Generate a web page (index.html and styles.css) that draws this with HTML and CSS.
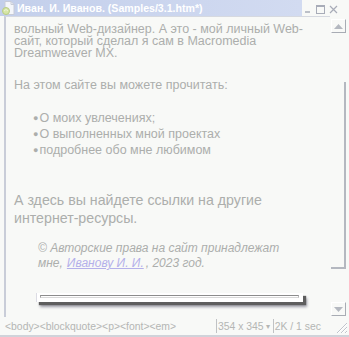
FILE: index.html
```html
<!DOCTYPE html>
<html>
<head>
<meta charset="utf-8">
<link rel="stylesheet" href="styles.css">
</head>
<body>
<div class="window">
  <div class="titlebar">
    <div class="title">
      <svg class="ticon" width="13" height="14" viewBox="0 0 13 14">
        <path d="M3 0.5 H9 L12 3.5 V13.5 H3 Z" fill="#f4f6fa" stroke="#c8ccd8"/>
        <path d="M9 0.5 V3.5 H12" fill="none" stroke="#c8ccd8"/>
        <circle cx="4" cy="10" r="3.5" fill="#d6e6a6" stroke="#b8cc84"/>
        <path d="M2 10 Q4 7 6 10" fill="none" stroke="#eef4d8"/>
      </svg>
      <span>Иван. И. Иванов. (Samples/3.1.htm*)</span>
    </div>
    <div class="controls">
      <span class="cbtn"><svg width="8" height="8" viewBox="0 0 8 8"><path d="M1 7 H6" stroke="#a8acb8" stroke-width="1.5"/></svg></span>
      <span class="cbtn"><svg width="9" height="9" viewBox="0 0 9 9"><rect x="0.5" y="0.5" width="8" height="8" fill="none" stroke="#a8acb8"/><path d="M0.5 1.5 H8.5" stroke="#a8acb8"/></svg></span>
      <span class="cbtn"><svg width="9" height="9" viewBox="0 0 9 9"><path d="M1 1 L8 8 M8 1 L1 8" stroke="#a8acb8" stroke-width="1.2"/></svg></span>
    </div>
  </div>
  <div class="main">
    <div class="doc">
      <p class="intro">вольный Web-дизайнер. А это - мой личный Web-сайт, который сделал я сам в Macromedia Dreamweaver MX.</p>
      <p class="lead">На этом сайте вы можете прочитать:</p>
      <ul class="list">
        <li>О моих увлечениях;</li>
        <li>О выполненных мной проектах</li>
        <li>подробнее обо мне любимом</li>
      </ul>
      <p class="big">А здесь вы найдете ссылки на другие интернет-ресурсы.</p>
      <div class="copy">
        <div class="cline">© Авторские права на сайт принадлежат</div>
        <div class="cline row"><span>мне,</span><span class="link">Иванову И. И.</span><span>, 2023 год.</span></div>
      </div>
      <div class="hrbox"><div class="hrline"></div></div>
    </div>
    <div class="scrollbar">
      <div class="sbtn up"><svg width="9" height="5" viewBox="0 0 9 5"><path d="M0 5 L4.5 0 L9 5 Z" fill="#b4b8c0"/></svg></div>
      <div class="track short"></div>
      <div class="thumb"></div>
      <div class="track"></div>
      <div class="sbtn down"><svg width="9" height="5" viewBox="0 0 9 5"><path d="M0 0 L4.5 5 L9 0 Z" fill="#b4b8c0"/></svg></div>
    </div>
  </div>
  <div class="status">
    <span class="tags">&lt;body&gt;&lt;blockquote&gt;&lt;p&gt;&lt;font&gt;&lt;em&gt;</span>
    <span class="info"><span class="sep"></span>354 x 345 <span class="arr">▾</span><span class="sep"></span>2K / 1 sec</span>
    <svg class="grip" width="13" height="13" viewBox="0 0 13 13">
      <path d="M12 2 L2 12 M12 6 L6 12 M12 10 L10 12" stroke="#c0c4cc" stroke-width="1"/>
      <path d="M12 3 L3 12 M12 7 L7 12 M12 11 L11 12" stroke="#ffffff" stroke-width="1"/>
    </svg>
  </div>
</div>
</body>
</html>
```
FILE: styles.css
```css
* { box-sizing: border-box; }
html, body { margin: 0; padding: 0; }
body {
  width: 349px;
  height: 337px;
  overflow: hidden;
  background: #f8f9f7;
  font-family: "Liberation Sans", Arial, sans-serif;
  color: #acaeac;
}
.window {
  width: 349px;
  height: 337px;
  display: flex;
  flex-direction: column;
}
.titlebar {
  height: 16px;
  display: flex;
  flex: none;
}
.title {
  width: 303px;
  background: linear-gradient(to right, #c3cfeb, #d2dbf1);
  color: #ffffff;
  font-weight: bold;
  font-size: 10.6px;
  display: flex;
  align-items: center;
  gap: 2px;
  padding-left: 2px;
  white-space: nowrap;
}
.ticon { flex: none; }
.controls {
  flex: 1;
  display: flex;
  align-items: center;
  justify-content: flex-end;
  gap: 2px;
  padding-right: 10px;
  padding-top: 2px;
}
.cbtn {
  width: 11px;
  height: 11px;
  display: flex;
  align-items: center;
  justify-content: center;
}
.main {
  height: 301px;
  display: flex;
  padding-left: 4px;
  flex: none;
}
.doc {
  flex: 1;
  border-left: 2px solid #c9cdd8;
  border-top: 1px solid #d6d9e0;
  padding: 6px 0 0 8px;
  overflow: hidden;
}
.doc p, .doc ul { margin: 0; }
.intro {
  font-size: 12.5px;
  line-height: 12px;
  width: 302px;
}
.lead {
  font-size: 12.5px;
  line-height: 12px;
  margin-top: 20px !important;
}
.list {
  list-style: none;
  padding: 0 0 0 19px;
  margin-top: 19px !important;
  font-size: 12.5px;
  line-height: 16px;
}
.list li::before {
  content: "●";
  font-size: 9px;
  margin-right: 1px;
  vertical-align: 1px;
}
.big {
  font-size: 14.2px;
  line-height: 18px;
  margin-top: 33px !important;
  width: 290px;
}
.copy {
  font-size: 12px;
  font-style: italic;
  line-height: 15px;
  margin: 14px 0 0 24px;
  width: 260px;
}
.cline { white-space: nowrap; }
.row { display: flex; gap: 4px; }
.link {
  color: #b4b0ea;
  text-decoration: underline;
  margin-right: -2px;
}
.hrbox {
  margin: 22px 0 0 22px;
  width: 267px;
  height: 9px;
  background: #ffffff;
  border-left: 1px solid #dcdce4;
  box-shadow: 3px 3px 1px #5e5e5e, 4px 5px 3px #9a9aa4;
  padding: 2px 4px 0 3px;
}
.hrline {
  height: 3px;
  border: 1px solid #8c8c8c;
  border-bottom-color: #d8d8d8;
  border-left-color: #a0a0a0;
  border-right-color: #b8b8b8;
}
.scrollbar {
  width: 15px;
  margin-right: 3px;
  margin-left: 1px;
  display: flex;
  flex-direction: column;
  padding-top: 3px;
}
.sbtn {
  height: 14px;
  flex: none;
  border-right: 1px solid #a8acb4;
  border-bottom: 1px solid #a8acb4;
  border-top: 1px solid #ffffff;
  border-left: 1px solid #ffffff;
  display: flex;
  align-items: center;
  justify-content: center;
}
.track { height: 33px; flex: none; }
.track.short { height: 49px; }
.thumb {
  height: 187px;
  flex: none;
  border-right: 2px solid #b4b8c0;
  border-bottom: 2px solid #b4b8c0;
}
.status {
  flex: 1;
  position: relative;
  display: flex;
  align-items: center;
  font-size: 10.4px;
  color: #b4b6b4;
  padding-left: 5px;
  border-bottom: 2px solid #d0d3da;
}
.tags { width: 211px; }
.info {
  display: flex;
  align-items: center;
  white-space: nowrap;
}
.sep {
  width: 1px;
  height: 14px;
  background: #c0c2c4;
  margin-right: 1px;
}
.arr { font-size: 8px; margin: 0 3px 0 2px; }
.grip {
  position: absolute;
  right: 1px;
  bottom: 1px;
}
```
